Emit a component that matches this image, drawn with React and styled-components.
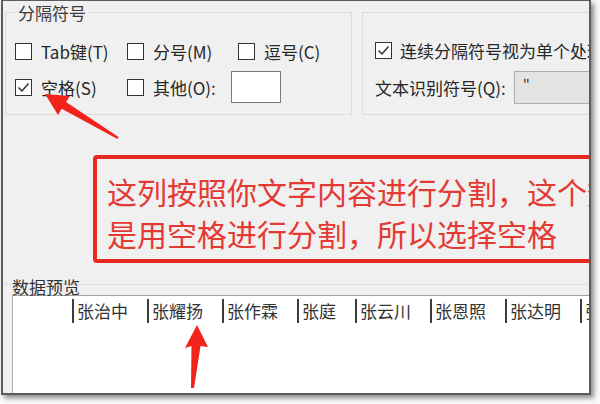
import React from 'react'
import styled, { createGlobalStyle } from 'styled-components'

const GlobalStyle = createGlobalStyle`
  html, body {
    margin: 0;
    padding: 0;
    background: #fafafa;
  }
  body {
    font-family: "Microsoft YaHei", "Noto Sans CJK SC", sans-serif;
    color: #262626;
  }
`

const names = ['张治中', '张耀扬', '张作霖', '张庭', '张云川', '张恩照', '张达明', '张学良']

export default function App() {
  return (
    <Page>
      <GlobalStyle />
      <Frame>
        <TopRow>
          <Group width="347px">
            <GroupTitle>分隔符号</GroupTitle>
            <OptionGrid>
              <Option>
                <Checkbox />
                <span>Tab键(T)</span>
              </Option>
              <Option>
                <Checkbox />
                <span>分号(M)</span>
              </Option>
              <Option>
                <Checkbox />
                <span>逗号(C)</span>
              </Option>
              <Option>
                <Checkbox checked />
                <span>空格(S)</span>
              </Option>
              <Option>
                <Checkbox />
                <span>其他(O):</span>
                <OtherInput />
              </Option>
            </OptionGrid>
          </Group>
          <Group width="280px" pad="12px">
            <OptionStack>
              <Option gap="8px">
                <Checkbox checked />
                <NoWrap>连续分隔符号视为单个处理(R)</NoWrap>
              </Option>
              <Option gap="8px">
                <NoWrap>文本识别符号(Q):</NoWrap>
                <QualifierSelect>"</QualifierSelect>
              </Option>
            </OptionStack>
          </Group>
        </TopRow>

        <Callout>
          <CalloutLine>这列按照你文字内容进行分割，这个数据</CalloutLine>
          <CalloutLine>是用空格进行分割，所以选择空格</CalloutLine>
        </Callout>

        <PreviewHead>
          <PreviewLabel>数据预览</PreviewLabel>
        </PreviewHead>
        <PreviewBox>
          <PreviewRow>
            <FirstCell />
            {names.map(n => (
              <Cell key={n}>{n}</Cell>
            ))}
          </PreviewRow>
        </PreviewBox>
      </Frame>

      <Arrows viewBox="0 0 600 404" width="600" height="404">
        <polygon
          fill="#f2231b"
          points="45,94 70,96 66,102 118.5,137 117.5,139 61.7,108.8 58,115"
        />
        <polygon
          fill="#f2231b"
          points="197,325 208,347 200.5,346 194,388 191,388 191.5,346 185,348"
        />
      </Arrows>
    </Page>
  )
}

const Checkbox = ({ checked }) => (
  <Box>
    {checked ? (
      <svg width="15" height="15" viewBox="0 0 15 15">
        <path d="M2.5 7.5 L6 11 L12.5 3.5" fill="none" stroke="#333" strokeWidth="1.5" />
      </svg>
    ) : null}
  </Box>
)

const Page = styled.div`
  position: relative;
  width: 600px;
  height: 404px;
  overflow: hidden;
  background: #fafafa;
`

const Frame = styled.div`
  margin-left: 1px;
  width: 586px;
  height: 392px;
  display: flex;
  flex-direction: column;
  background: #f0f0f0;
  border-top: 1px solid #5c5c5c;
  border-left: 2px solid #5c5c5c;
  border-right: 2px solid #5c5c5c;
  border-bottom: 2px solid #5c5c5c;
  box-shadow: 3px 3px 5px rgba(0, 0, 0, 0.45);
  overflow: hidden;
`

const TopRow = styled.div`
  display: flex;
  gap: 10px;
  padding: 11px 0 0 2px;
`

const Group = styled.div`
  position: relative;
  flex: 0 0 auto;
  box-sizing: border-box;
  width: ${p => p.width};
  height: 103px;
  border: 1px solid #dcdcdc;
  padding: 0 0 0 ${p => p.pad || '9px'};
`

const GroupTitle = styled.span`
  position: absolute;
  top: -10px;
  left: 9px;
  padding: 0 3px;
  font-size: 17px;
  line-height: 20px;
  background: #f0f0f0;
  color: #3a3a3a;
`

const OptionGrid = styled.div`
  display: grid;
  grid-template-columns: 112px 111px auto;
  grid-auto-rows: 36px;
  padding-top: 20px;
`

const OptionStack = styled.div`
  display: grid;
  grid-auto-rows: 37px;
  padding-top: 19px;
`

const Option = styled.label`
  display: flex;
  align-items: center;
  gap: ${p => p.gap || '9px'};
  font-size: 17px;
  white-space: nowrap;
`

const NoWrap = styled.span`
  white-space: nowrap;
`

const Box = styled.span`
  flex: 0 0 auto;
  box-sizing: border-box;
  width: 17px;
  height: 17px;
  border: 1px solid #333;
  background: #fff;
  display: flex;
  align-items: center;
  justify-content: center;
`

const OtherInput = styled.span`
  flex: 0 0 auto;
  margin-left: 6px;
  box-sizing: border-box;
  width: 50px;
  height: 32px;
  border: 1px solid #7a7a7a;
  background: #fff;
`

const QualifierSelect = styled.span`
  flex: 0 0 auto;
  box-sizing: border-box;
  width: 120px;
  height: 33px;
  padding: 2px 0 0 8px;
  border: 1px solid #adadad;
  background: #e3e3e3;
  font-size: 15px;
  line-height: 20px;
  color: #444;
`

const Callout = styled.div`
  flex: 0 0 auto;
  box-sizing: border-box;
  margin: 40px 0 0 90px;
  width: 540px;
  height: 108px;
  padding: 12px 0 0 10px;
  border: 4px solid #e9281f;
  border-radius: 4px;
  display: flex;
  flex-direction: column;
  gap: 2px;
`

const CalloutLine = styled.div`
  font-size: 30px;
  line-height: 40px;
  color: #e43a33;
  white-space: nowrap;
`

const PreviewHead = styled.div`
  position: relative;
  margin-top: 12px;
  height: 20px;
  padding-left: 9px;

  &::before {
    content: '';
    position: absolute;
    left: 0;
    right: 0;
    top: 9px;
    border-top: 1px solid #dedede;
  }
`

const PreviewLabel = styled.span`
  position: relative;
  font-size: 17px;
  line-height: 20px;
  color: #333;
`

const PreviewBox = styled.div`
  flex: 1;
  margin-left: 9px;
  width: 600px;
  background: #fff;
  border-top: 1px solid #a0a0a0;
  border-left: 1px solid #b4b4b4;
  padding-top: 3px;
`

const PreviewRow = styled.div`
  display: flex;
  height: 24px;
`

const FirstCell = styled.div`
  flex: 0 0 59px;
`

const Cell = styled.div`
  flex: 0 0 auto;
  border-left: 2px solid #3c3c3c;
  padding: 0 19px 0 3px;
  font-size: 17px;
  line-height: 24px;
  color: #333;
  white-space: nowrap;
`

const Arrows = styled.svg`
  position: absolute;
  left: 0;
  top: 0;
  pointer-events: none;
`
